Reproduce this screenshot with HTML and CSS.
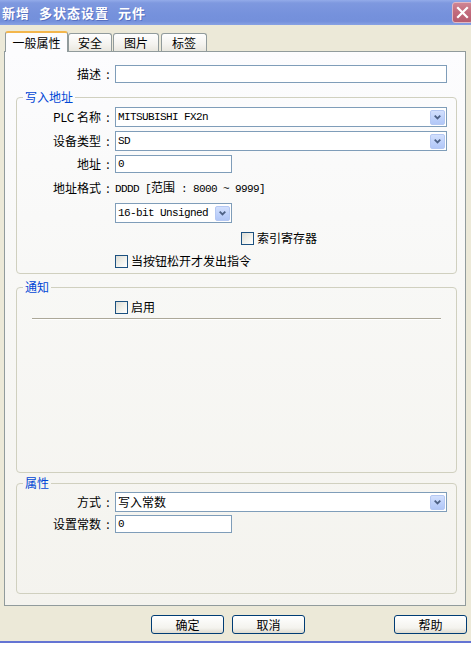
FILE: index.html
```html
<!DOCTYPE html>
<html lang="zh-CN">
<head>
<meta charset="utf-8">
<title>新增 多状态设置 元件</title>
<link rel="stylesheet" href="styles.css">
</head>
<body>
<div class="window">
  <div class="titlebar">
    <span class="title">新增 多状态设置 元件</span>
    <span class="close">
      <svg width="21" height="21" viewBox="0 0 21 21"><path d="M6 6 L15 15 M15 6 L6 15" stroke="#fff" stroke-width="2.2" stroke-linecap="square"/></svg>
    </span>
  </div>

  <div class="tabs">
    <div class="tab active">一般属性</div>
    <div class="tab t2">安全</div>
    <div class="tab t3">图片</div>
    <div class="tab t4">标签</div>
  </div>

  <div class="panel">
    <div class="row desc">
      <span class="lbl lbl-panel">描述</span><span class="colon">:</span>
      <div class="field"></div>
    </div>

    <fieldset class="group g1">
      <legend>写入地址</legend>
      <div class="row r-plc">
        <span class="lbl">PLC 名称</span><span class="colon">:</span>
        <div class="field select"><span class="mono">MITSUBISHI FX2n</span><span class="dd"><svg width="7" height="5" viewBox="0 0 7 5"><path d="M0.7 0.7 L3.5 3.5 L6.3 0.7" fill="none" stroke="#4d6185" stroke-width="1.8"/></svg></span></div>
      </div>
      <div class="row r-dev">
        <span class="lbl">设备类型</span><span class="colon">:</span>
        <div class="field select"><span class="mono">SD</span><span class="dd"><svg width="7" height="5" viewBox="0 0 7 5"><path d="M0.7 0.7 L3.5 3.5 L6.3 0.7" fill="none" stroke="#4d6185" stroke-width="1.8"/></svg></span></div>
      </div>
      <div class="row r-addr">
        <span class="lbl">地址</span><span class="colon">:</span>
        <div class="field short"><span class="mono">0</span></div>
      </div>
      <div class="row r-fmt">
        <span class="lbl">地址格式</span><span class="colon">:</span>
        <span class="fmt"><span class="mono">DDDD [</span>范围<span class="mono"> : 8000 ~ 9999]</span></span>
      </div>
      <div class="row r-type indent">
        <div class="field short select"><span class="mono">16-bit Unsigned</span><span class="dd"><svg width="7" height="5" viewBox="0 0 7 5"><path d="M0.7 0.7 L3.5 3.5 L6.3 0.7" fill="none" stroke="#4d6185" stroke-width="1.8"/></svg></span></div>
      </div>
      <div class="row r-idx">
        <span class="check"></span><span class="ctext">索引寄存器</span>
      </div>
      <div class="row r-rel indent">
        <span class="check"></span><span class="ctext">当按钮松开才发出指令</span>
      </div>
    </fieldset>

    <fieldset class="group g2">
      <legend>通知</legend>
      <div class="row r-en indent">
        <span class="check"></span><span class="ctext">启用</span>
      </div>
      <div class="sep"></div>
    </fieldset>

    <fieldset class="group g3">
      <legend>属性</legend>
      <div class="row r-mode">
        <span class="lbl">方式</span><span class="colon">:</span>
        <div class="field select"><span>写入常数</span><span class="dd"><svg width="7" height="5" viewBox="0 0 7 5"><path d="M0.7 0.7 L3.5 3.5 L6.3 0.7" fill="none" stroke="#4d6185" stroke-width="1.8"/></svg></span></div>
      </div>
      <div class="row r-const">
        <span class="lbl">设置常数</span><span class="colon">:</span>
        <div class="field short"><span class="mono">0</span></div>
      </div>
    </fieldset>
  </div>

  <div class="buttons">
    <div class="btn">确定</div>
    <div class="btn">取消</div>
    <div class="btn help">帮助</div>
  </div>
</div>
</body>
</html>
```

FILE: styles.css
```css
* { box-sizing: border-box; }
html, body { margin: 0; padding: 0; }
body {
  width: 471px;
  height: 657px;
  overflow: hidden;
  background: #fff;
  font-family: "Noto Sans CJK SC", "Noto Sans", sans-serif;
  font-size: 12px;
  color: #000;
}

.window {
  height: 643px;
  background: #ece9d8;
  border-bottom: 2px solid #6474d3;
  display: flex;
  flex-direction: column;
}

/* title bar */
.titlebar {
  height: 25px;
  flex: none;
  display: flex;
  align-items: center;
  justify-content: space-between;
  padding-left: 2px;
  overflow: hidden;
  background: linear-gradient(#93abe9 0%, #7e98df 12%, #7591dc 60%, #7490db 85%, #88a2e4 100%);
}
.title {
  color: #fff;
  font-weight: bold;
  font-size: 13px;
  line-height: 16px;
  letter-spacing: 1px;
  word-spacing: 5px;
  text-shadow: 1px 1px 0 rgba(30, 50, 140, 0.35);
}
.close {
  width: 21px;
  height: 21px;
  margin-right: -2px;
  border: 1px solid #e2b8c2;
  border-radius: 3px;
  background: linear-gradient(#cf8593, #c16a7c 50%, #b65d70);
  display: flex;
  align-items: center;
  justify-content: center;
}
.close svg { display: block; margin: -1px; }

/* tabs */
.tabs {
  flex: none;
  display: flex;
  align-items: flex-start;
  height: 21px;
  margin-top: 6px;
  padding-left: 5px;
  position: relative;
  z-index: 1;
}
.tab {
  height: 18px;
  margin-top: 2px;
  border: 1px solid #919b9c;
  border-bottom: none;
  border-radius: 3px 3px 0 0;
  background: linear-gradient(#fefefe, #f4f3ef 60%, #e9e7df);
  display: flex;
  align-items: center;
  justify-content: center;
  line-height: 14px;
  padding-top: 1px;
}
.tab.active {
  width: 63px;
  height: 21px;
  margin-top: 0;
  border-top: 2px solid #f3b64c;
  background: #fcfcfe;
  padding-top: 0;
}
.t2 { width: 44px; }
.t3 { width: 46px; margin-left: 1px; }
.t4 { width: 46px; margin-left: 2px; }

/* panel */
.panel {
  flex: none;
  height: 555px;
  margin: -1px 5px 0 4px;
  border: 1px solid #919b9c;
  background: linear-gradient(#fcfcfe 0%, #f8f8f6 40%, #f4f3ee 100%);
  padding: 13px 0 0 0;
  display: flex;
  flex-direction: column;
}

.row {
  display: flex;
  align-items: center;
  line-height: 14px;
  flex: none;
}
.desc { margin-right: 18px; }
.lbl { width: 84px; text-align: right; white-space: nowrap; }
.lbl-panel { width: 96px; }
.colon { width: 14px; text-align: center; }
.indent { padding-left: 98px; }

.field {
  flex: 1;
  height: 18px;
  border: 1px solid #7f9db9;
  background: #fff;
  display: flex;
  align-items: center;
  padding-left: 2px;
  overflow: hidden;
  white-space: nowrap;
}
.field.short { flex: none; width: 117px; }
.field.select {
  height: 20px;
  justify-content: space-between;
}
.dd {
  flex: none;
  width: 15px;
  height: 15px;
  margin-right: 1px;
  border: 1px solid #b5c8f3;
  border-radius: 2px;
  background: linear-gradient(#d3e0fd, #bdd0fa 60%, #b2c7f7);
  display: flex;
  align-items: center;
  justify-content: center;
}
.dd svg { display: block; }

.mono {
  font-family: "Liberation Mono", "DejaVu Sans Mono", monospace;
  font-size: 11px;
  letter-spacing: -0.6px;
  white-space: pre;
}
.fmt { white-space: nowrap; }

.check {
  flex: none;
  width: 13px;
  height: 13px;
  border: 1px solid #1c5180;
  background: linear-gradient(135deg, #dcdcd5 0%, #f0f0ea 50%, #fff 100%);
}
.ctext { margin-left: 3px; white-space: nowrap; }

/* group boxes */
.group {
  flex: none;
  margin: 0 8px 0 11px;
  padding: 0 9px 0 0;
  min-width: 0;
  border: 1px solid #d0d0bf;
  border-radius: 4px;
  display: flex;
  flex-direction: column;
}
.group legend {
  color: #0046d5;
  line-height: 14px;
  padding: 0 2px;
  margin-left: 6px;
}
.g1 { height: 184px; margin-top: 7px; }
.g2 { height: 193px; margin-top: 6px; }
.g3 { height: 118px; margin-top: 3px; }

.r-plc { margin-top: 3px; }
.r-dev { margin-top: 4px; }
.r-addr { margin-top: 4px; }
.r-fmt { margin-top: 8px; height: 14px; }
.r-type { margin-top: 8px; }
.r-idx { margin-top: 8px; padding-left: 224px; }
.r-rel { margin-top: 9px; }

.r-en { margin-top: 6px; }
.sep {
  flex: none;
  height: 2px;
  margin: 4px 6px 0 15px;
  border-top: 1px solid #aca899;
  border-bottom: 1px solid #fff;
}

.r-mode { margin-top: 2px; }
.r-const { margin-top: 3px; }

/* buttons */
.buttons {
  flex: none;
  display: flex;
  gap: 8px;
  margin-top: 9px;
  padding-left: 151px;
  padding-right: 4px;
}
.btn {
  width: 73px;
  height: 19px;
  border: 1px solid #003c74;
  border-radius: 3px;
  background: linear-gradient(#ffffff, #f4f3ee 70%, #dedbd0);
  display: flex;
  align-items: center;
  justify-content: center;
  line-height: 14px;
}
.btn.help { margin-left: auto; }
```
